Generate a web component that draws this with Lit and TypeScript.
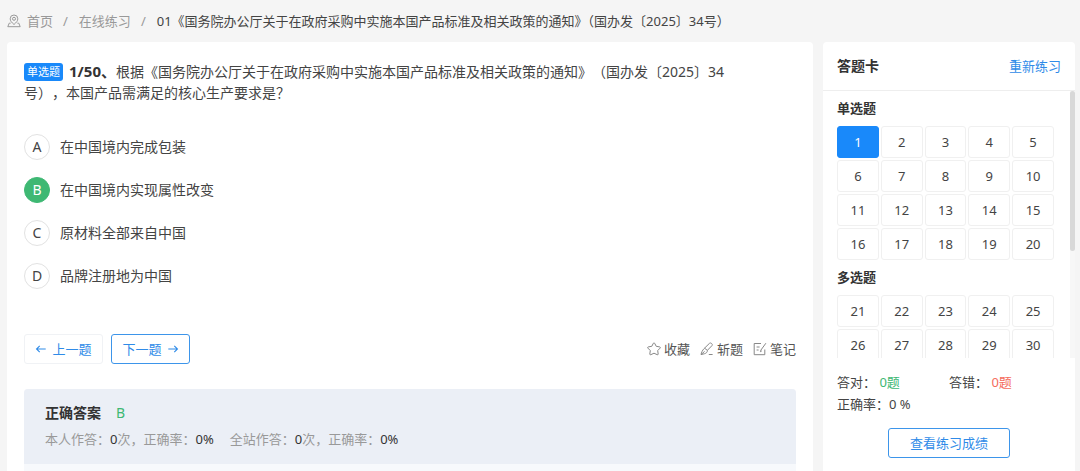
import { LitElement, html, css, svg } from "lit";
import { customElement, state } from "lit/decorators.js";
import { classMap } from "lit/directives/class-map.js";

const range = (from: number, to: number) =>
  Array.from({ length: to - from + 1 }, (_, i) => from + i);

const icon = (cls: string, body: unknown) =>
  html`<svg class=${cls} viewBox="0 0 14 14" aria-hidden="true">${body}</svg>`;

const pin = svg`<path d="M7 10.500C4.600 8.400 3.200 6.900 3.200 4.800a3.800 3.800 0 0 1 7.600 0C10.800 6.900 9.400 8.400 7 10.500Z"/><circle cx="7" cy="4.800" r="1.500"/><path d="M3.600 9.200H2.200L.8 12.700h12.400l-1.400-3.500h-1.400"/>`;
const arrowLeft = svg`<path d="M12.500 7H1.800M5.500 3.300 1.800 7l3.700 3.700"/>`;
const arrowRight = svg`<path d="M1.500 7h10.700M8.500 3.300 12.200 7l-3.700 3.700"/>`;
const star = svg`<path stroke-linejoin="round" d="M6.300 1.300q.7-1 1.400 0L9.200 4.300l3.500.6q1.100.3.400 1.200L10.700 8.600l.5 3.400q0 1.100-1 .7L7 11.200l-3.200 1.500q-1 .4-1-.7l.5-3.400L.9 6.100Q.2 5.200 1.300 4.900l3.500-.6Z"/>`;
const knife = svg`<path stroke-linejoin="round" d="M1 12.600c.4-2.200 1.400-4.300 3.100-6L9.300 1.500c.6-.6 1.400-.7 2-.2l.6.500c.6.600.5 1.400-.1 2L7.400 8.300M4.600 6.200l2.900 2.300c-.2 1.700-1.200 2.700-2.900 3.200L1 12.600l3.600-3.200M8.800 12.500h3.800"/>`;
const note = svg`<path d="M8 1.500H1.200v11.200h10.600V7.500M3.600 5h3M3.600 8h2M12.900 1.200 7.800 8.200l-.4 1.500 1.400-.8"/>`;

@customElement("app-root")
export class AppRoot extends LitElement {
  @state() private answer = "B";
  @state() private current = 1;

  private options = [
    ["A", "在中国境内完成包装"],
    ["B", "在中国境内实现属性改变"],
    ["C", "原材料全部来自中国"],
    ["D", "品牌注册地为中国"],
  ];

  private groups = [
    { title: "单选题", numbers: range(1, 20) },
    { title: "多选题", numbers: range(21, 30) },
  ];

  static styles = css`
    :host {
      display: flex;
      flex-direction: column;
      height: 100vh;
      overflow: hidden;
      box-sizing: border-box;
      padding: 0 5px 0 7px;
      background: #f5f5f5;
      color: #444;
      font: 13px/22px "Noto Sans", "Noto Sans CJK SC", sans-serif;
    }
    * { box-sizing: border-box; }
    h1, h2, h3, p { margin: 0; }
    a { color: inherit; text-decoration: none; }
    button { font: inherit; color: inherit; cursor: pointer; padding: 0; background: #fff; }
    svg { fill: none; stroke: currentColor; flex: none; }
    .s14 { width: 14px; height: 14px; }
    .s12 { width: 12px; height: 12px; stroke-width: 1.3; }

    .crumbs {
      display: flex;
      align-items: center;
      height: 41px;
      margin-bottom: 1px;
      flex: none;
      color: #999;
      white-space: nowrap;
    }
    .crumbs a + .sep { margin-left: 10px; }
    .sep { margin-right: 11px; }
    .home { display: flex; align-items: center; gap: 6px; }
    .here { color: #444; }

    .columns { display: flex; gap: 10px; flex: 1; min-height: 0; }
    .main {
      flex: 1;
      min-width: 0;
      display: flex;
      flex-direction: column;
      padding: 19px 17px 0;
      background: #fff;
      border-radius: 4px 4px 0 0;
    }
    .question {
      padding-right: 40px;
      font-size: 14px;
      line-height: 21px;
      font-weight: 400;
      text-spacing-trim: space-all;
    }
    .tag {
      display: inline-block;
      margin-right: 6px;
      padding: 0 3px;
      border-radius: 3px;
      background: #1989fa;
      color: #fff;
      font-size: 11px;
      line-height: 18px;
      vertical-align: 1px;
    }
    .number { font-size: 15px; line-height: 20px; color: #333; }

    .options {
      display: flex;
      flex-direction: column;
      align-items: flex-start;
      gap: 17px;
      margin: 0;
      padding: 31px 0 0;
      border: 0;
      font-size: 14px;
    }
    .option { display: flex; align-items: center; gap: 10px; cursor: pointer; }
    .mark { display: grid; place-items: center; width: 26px; height: 26px; }
    .mark > * { grid-area: 1 / 1; }
    .radio {
      appearance: none;
      width: 26px;
      height: 26px;
      margin: 0;
      border: 1px solid #e2e2e2;
      border-radius: 50%;
      background: #fff;
    }
    .radio:checked { background: #3eb873; border-color: #3eb873; }
    .radio:checked + .letter { color: #fff; }

    .actions { display: flex; align-items: center; gap: 8px; margin-top: 45px; }
    .nav {
      display: flex;
      align-items: center;
      justify-content: center;
      gap: 5px;
      width: 79px;
      height: 30px;
      border: 1px solid #f0f2f5;
      border-radius: 3px;
      color: #2f8be8;
    }
    .nav.next { border-color: #3d95ea; }
    .tools { display: flex; gap: 10px; margin-left: auto; color: #555; }
    .tool { display: flex; align-items: center; gap: 3px; border: 0; }
    .tool svg { color: #888; }

    .answer {
      flex: 1;
      margin-top: 25px;
      border-radius: 4px 4px 0 0;
      background: #f7f9fc;
      overflow: hidden;
    }
    .result { height: 75px; padding: 13px 21px 0; background: #ebeff6; }
    .correct { display: flex; gap: 15px; font-size: 14px; color: #333; }
    .correct h2 { font-size: 14px; }
    .good { color: #3eb873; }
    .bad { color: #f56c5c; }
    .stats { display: flex; gap: 16px; margin-top: 4px; color: #999; }
    .stats b { font-weight: 400; color: #333; }

    .side {
      flex: none;
      width: 252px;
      display: flex;
      flex-direction: column;
      background: #fff;
      border-radius: 4px 4px 0 0;
    }
    .head {
      display: flex;
      align-items: center;
      justify-content: space-between;
      height: 49px;
      padding: 0 14px;
      border-bottom: 1px solid #eee;
    }
    .head h2 { font-size: 14px; color: #333; }
    .redo { color: #2f8be8; }
    .scroll { display: flex; flex: 1; min-height: 0; }
    .list { flex: 1; overflow: hidden; padding: 0 16px 0 14px; }
    .bar { width: 5px; background: #f7f7f7; }
    .thumb { height: 60%; border-radius: 3px; background: #d8d8d8; }
    .list h3 { font-size: 13px; line-height: 35px; color: #333; }
    .cells { display: grid; grid-template-columns: repeat(5, 1fr); gap: 2px; }
    .cell { height: 32px; border: 1px solid #f0f0f0; border-radius: 3px; }
    .cell.on { background: #1989fa; border-color: #1989fa; color: #fff; }
    .foot { flex: none; padding: 13px 14px; }
    .score { display: grid; grid-template-columns: 1fr 1fr; }
    .view {
      display: block;
      width: 122px;
      height: 30px;
      margin: 13px auto 0;
      border: 1px solid #3d95ea;
      border-radius: 3px;
      color: #2f8be8;
    }
  `;

  render() {
    return html`
      <nav class="crumbs">
        <a class="home" href="#">${icon("s14", pin)}首页</a>
        <span class="sep">/</span>
        <a href="#">在线练习</a>
        <span class="sep">/</span>
        <span class="here">01《国务院办公厅关于在政府采购中实施本国产品标准及相关政策的通知》（国办发〔2025〕34号）</span>
      </nav>
      <div class="columns">
        <main class="main">
          <h1 class="question"><span class="tag">单选题</span><b class="number">1/50、</b>根据《国务院办公厅关于在政府采购中实施本国产品标准及相关政策的通知》（国办发〔2025〕34号），本国产品需满足的核心生产要求是？</h1>
          <fieldset class="options">
            ${this.options.map(
              ([key, text]) => html`<label class="option">
                <span class="mark">
                  <input class="radio" type="radio" name="answer" .checked=${this.answer === key}
                    @change=${() => (this.answer = key)} />
                  <span class="letter">${key}</span>
                </span>
                <span>${text}</span>
              </label>`
            )}
          </fieldset>
          <div class="actions">
            <button class="nav">${icon("s12", arrowLeft)}上一题</button>
            <button class="nav next">下一题${icon("s12", arrowRight)}</button>
            <div class="tools">
              <button class="tool">${icon("s14", star)}收藏</button>
              <button class="tool">${icon("s14", knife)}斩题</button>
              <button class="tool">${icon("s14", note)}笔记</button>
            </div>
          </div>
          <section class="answer">
            <div class="result">
              <div class="correct"><h2>正确答案</h2><span class="good">B</span></div>
              <p class="stats">
                <span>本人作答：<b>0</b>次，正确率：<b>0%</b></span>
                <span>全站作答：<b>0</b>次，正确率：<b>0%</b></span>
              </p>
            </div>
          </section>
        </main>
        <aside class="side">
          <div class="head"><h2>答题卡</h2><a class="redo" href="#">重新练习</a></div>
          <div class="scroll">
            <div class="list">
              ${this.groups.map(
                (group) => html`<h3>${group.title}</h3>
                  <div class="cells">
                    ${group.numbers.map(
                      (n) => html`<button class=${classMap({ cell: true, on: n === this.current })}
                        @click=${() => (this.current = n)}>${n}</button>`
                    )}
                  </div>`
              )}
            </div>
            <div class="bar"><div class="thumb"></div></div>
          </div>
          <div class="foot">
            <div class="score">
              <span>答对： <span class="good">0题</span></span>
              <span>答错： <span class="bad">0题</span></span>
              <span>正确率：0 %</span>
            </div>
            <button class="view">查看练习成绩</button>
          </div>
        </aside>
      </div>
    `;
  }
}
